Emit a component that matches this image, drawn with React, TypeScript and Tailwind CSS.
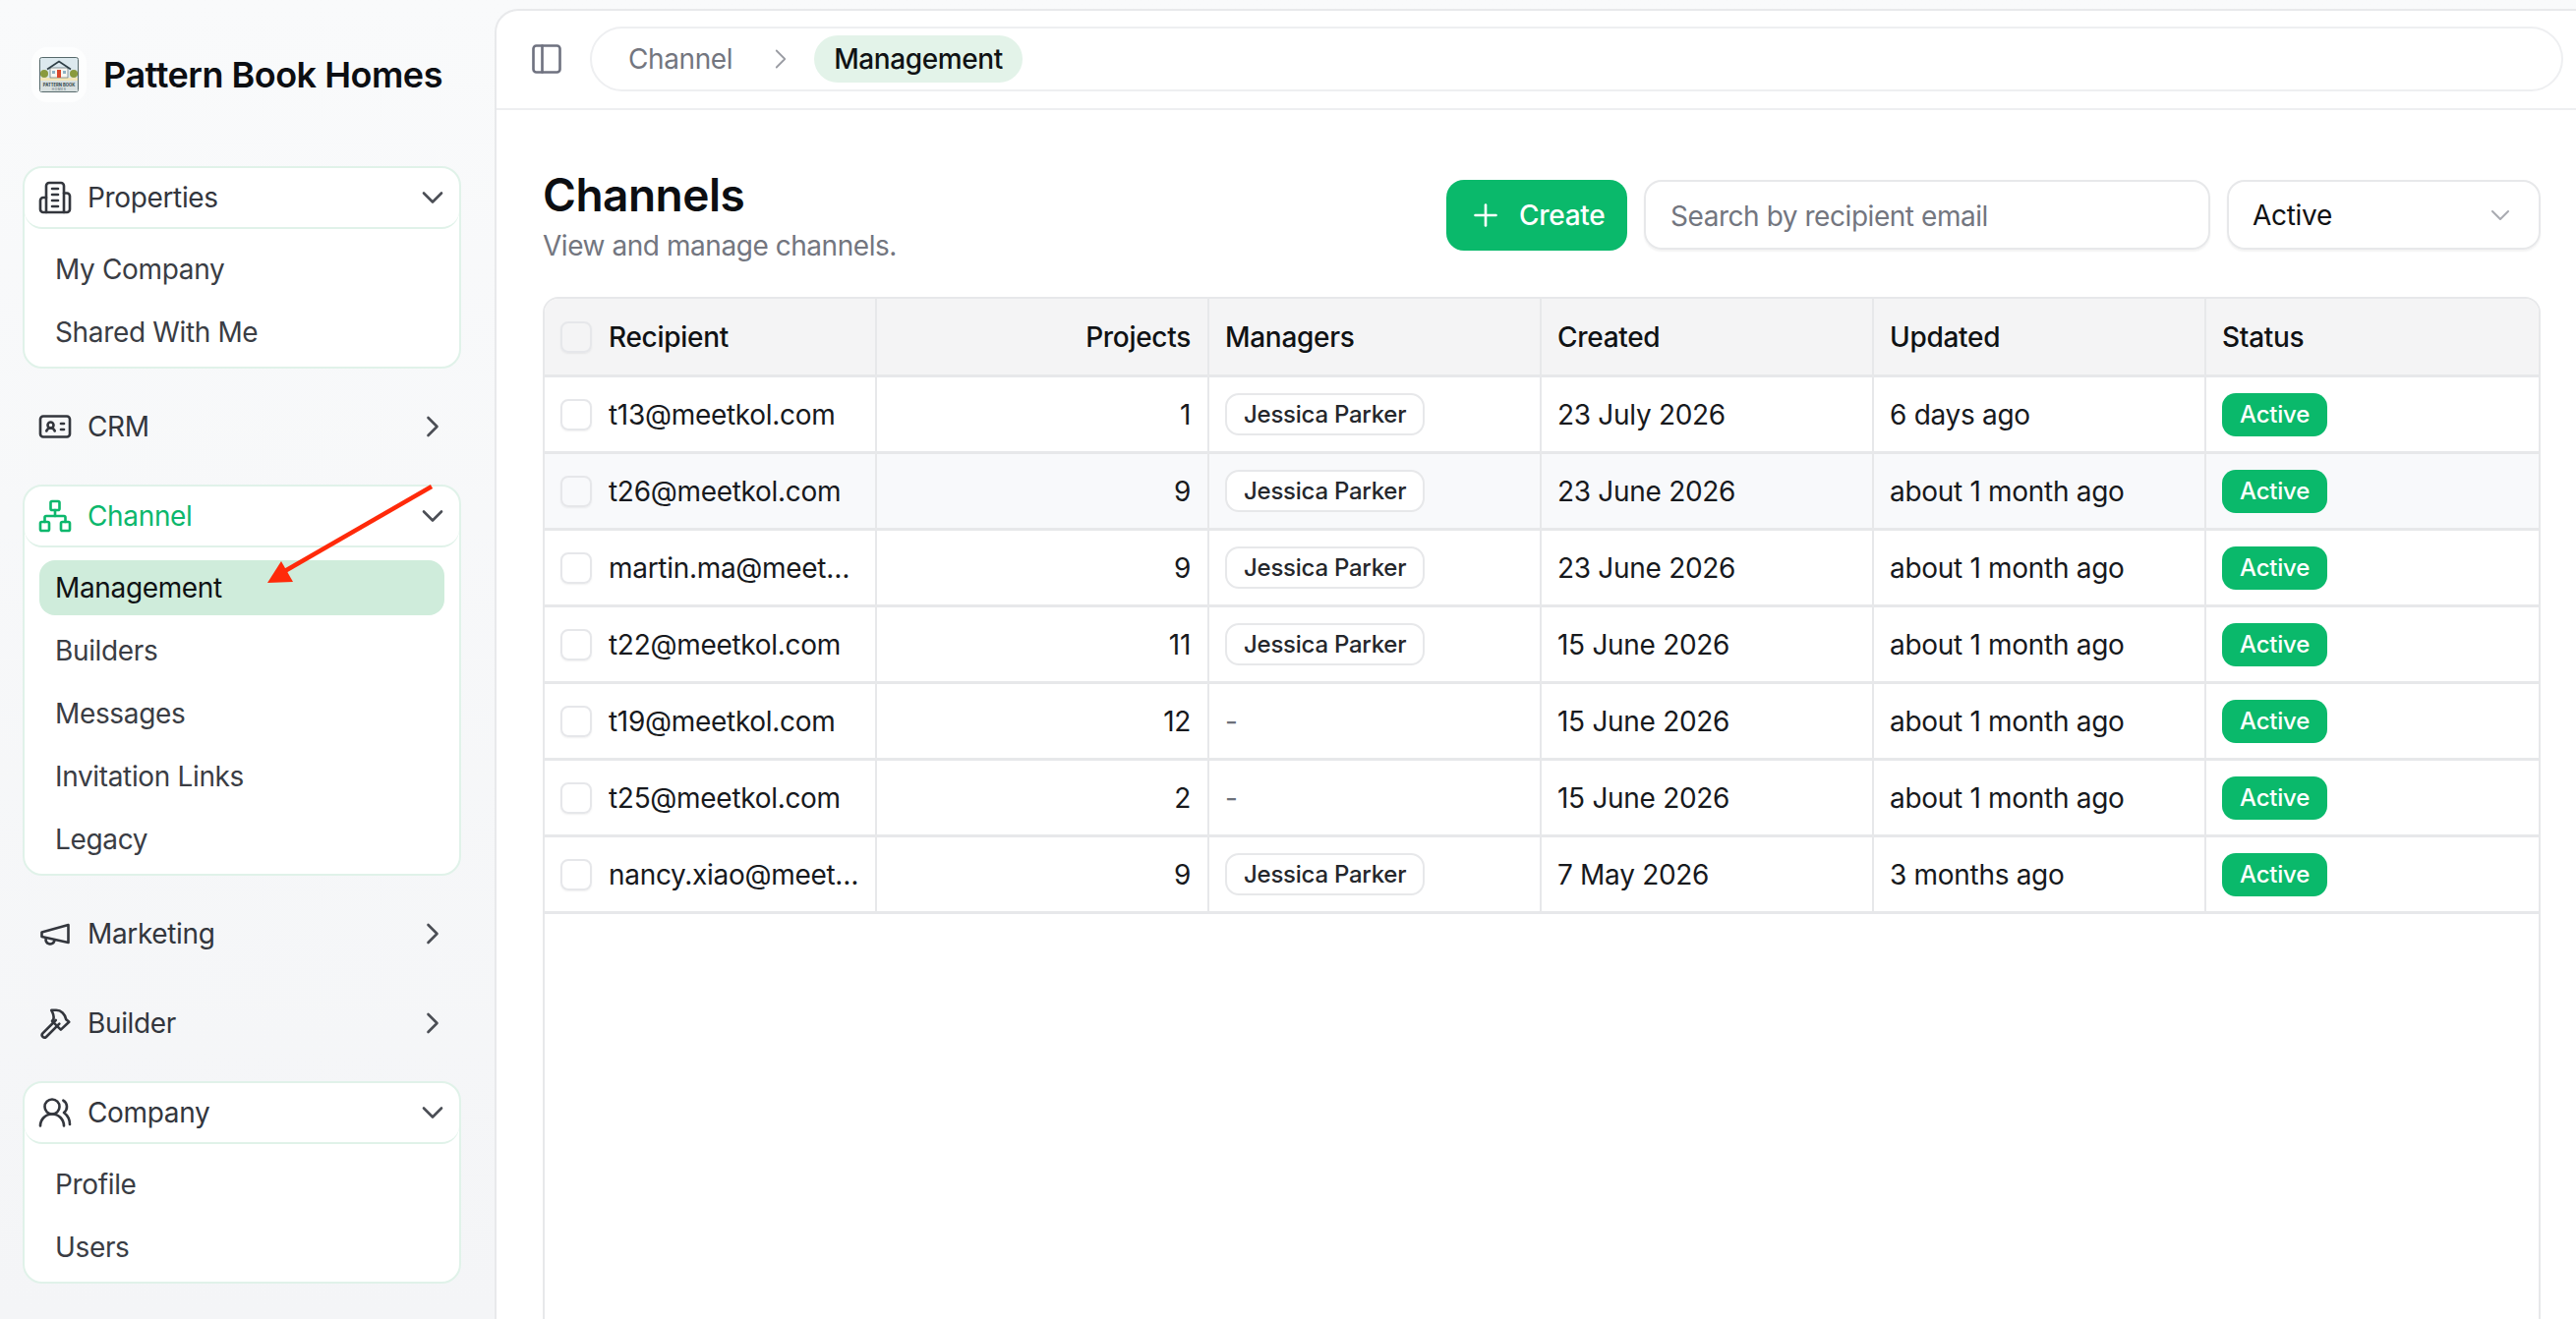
import { ChevronDown, ChevronRight, IdCard, Network, PanelLeft, Plus, UsersRound } from 'lucide-react'
import type { ReactNode } from 'react'

const rows = [
    { email: 't13@meetkol.com', projects: 1, manager: true, created: '23 July 2026', updated: '6 days ago' },
    { email: 't26@meetkol.com', projects: 9, manager: true, created: '23 June 2026', updated: 'about 1 month ago' },
    { email: 'martin.ma@meetkol.com', projects: 9, manager: true, created: '23 June 2026', updated: 'about 1 month ago' },
    { email: 't22@meetkol.com', projects: 11, manager: true, created: '15 June 2026', updated: 'about 1 month ago' },
    { email: 't19@meetkol.com', projects: 12, manager: false, created: '15 June 2026', updated: 'about 1 month ago' },
    { email: 't25@meetkol.com', projects: 2, manager: false, created: '15 June 2026', updated: 'about 1 month ago' },
    { email: 'nancy.xiao@meetkol.com', projects: 9, manager: true, created: '7 May 2026', updated: '3 months ago' },
]

const iconClass = 'h-9 w-9'

function Logo() {
    return (
        <div className="flex h-14 w-14 shrink-0 items-center justify-center rounded-2xl bg-white/70">
            <svg width="40" height="36" viewBox="0 0 40 36">
                <rect x="0.5" y="0.5" width="39" height="35" rx="2" fill="#dce9ee" stroke="#56696b" />
                <rect x="1" y="21" width="38" height="3" fill="#f3e6b8" />
                <circle cx="5" cy="17" r="4" fill="#8a9a3c" />
                <circle cx="35" cy="17" r="4" fill="#8a9a3c" />
                <rect x="11" y="11" width="18" height="10" fill="#f7f7f2" stroke="#4a5a60" strokeWidth="0.6" />
                <path d="M8 12.500 20 4.500l12 8" fill="none" stroke="#2f3f46" strokeWidth="1.6" />
                <rect x="18" y="13" width="4" height="8" fill="#d9472b" />
                <rect x="13" y="14" width="3" height="3" fill="#8fb2c4" />
                <rect x="24" y="14" width="3" height="3" fill="#8fb2c4" />
                <rect x="1" y="24" width="38" height="11" fill="#d8e0e0" />
                <text x="20" y="29.500" textAnchor="middle" fontSize="4.200" fontWeight="700" fill="#2f3f46">PATTERN BOOK</text>
                <text x="20" y="34" textAnchor="middle" fontSize="3.200" letterSpacing="0.600" fill="#4a5a60">HOMES</text>
            </svg>
        </div>
    )
}

// older lucide shapes, the installed package has redrawn these
function BuildingIcon() {
    return (
        <svg className={iconClass} viewBox="0 0 24 24" fill="none" stroke="currentColor" strokeWidth="1.75" strokeLinecap="round" strokeLinejoin="round">
            <path d="M6 22V4a2 2 0 0 1 2-2h8a2 2 0 0 1 2 2v18Z" />
            <path d="M6 12H4a2 2 0 0 0-2 2v6a2 2 0 0 0 2 2h2" />
            <path d="M18 9h2a2 2 0 0 1 2 2v9a2 2 0 0 1-2 2h-2" />
            <path d="M10 6h4M10 10h4M10 14h4M10 18h4" />
        </svg>
    )
}

function MegaphoneIcon() {
    return (
        <svg className={iconClass} viewBox="0 0 24 24" fill="none" stroke="currentColor" strokeWidth="1.75" strokeLinecap="round" strokeLinejoin="round">
            <path d="m3 11 18-5v12L3 14v-3z" />
            <path d="M11.6 16.8a3 3 0 1 1-5.8-1.6" />
        </svg>
    )
}

function HammerIcon() {
    return (
        <svg className={iconClass} viewBox="0 0 24 24" fill="none" stroke="currentColor" strokeWidth="1.75" strokeLinecap="round" strokeLinejoin="round">
            <path d="M12.5 10 3.6 18.9a1.7 1.7 0 0 0 2.4 2.4l8.900-8.900" />
            <path d="M9.500 3.200h3.300c3.300 0 6 2.600 6.700 6.300l2 1.700-5.600 5.200-1.400-1.300-4.500-4.500 1-1.500c.4-2.400-.4-4-1.500-5.900Z" />
        </svg>
    )
}

function NavHeader({ icon, label, open, active, grouped }: { icon: ReactNode; label: string; open?: boolean; active?: boolean; grouped?: boolean }) {
    return (
        <div className={`flex items-center ${grouped ? 'h-[60px] pl-[13px] pr-[9px]' : 'h-16 pl-[15px] pr-[11px]'} ${active ? 'text-[#0cb76c]' : 'text-[#33363d]'}`}>
            {icon}
            <span className="ml-[15px] flex-1 text-[28px] leading-none tracking-[-0.35px]">{label}</span>
            {open ? (
                <ChevronDown className="h-9 w-9 text-[#4b4e55]" strokeWidth={1.75} />
            ) : (
                <ChevronRight className="h-9 w-9 text-[#4b4e55]" strokeWidth={1.75} />
            )}
        </div>
    )
}

function NavGroup({ icon, label, items, active, current }: { icon: ReactNode; label: string; items: string[]; active?: boolean; current?: string }) {
    return (
        <div className="rounded-[20px] border-2 border-[#e0f2e9] bg-white">
            <div className="rounded-[18px] border-b-2 border-[#e0f2e9]">
                <NavHeader icon={icon} label={label} open active={active} grouped />
            </div>
            <div className="flex flex-col gap-2 pb-[7px] pl-[15px] pr-[15px] pt-[13px]">
                {items.map((item) => (
                    <div
                        key={item}
                        className={`flex h-14 items-center rounded-2xl px-[16px] text-[28px] leading-none tracking-[-0.35px] ${item === current ? 'bg-[#cfecdb] text-[#101214]' : 'text-[#3a3d44]'}`}
                    >
                        {item}
                    </div>
                ))}
            </div>
        </div>
    )
}

function Sidebar() {
    return (
        <aside className="flex w-[503px] shrink-0 flex-col pl-[23px] pr-[34px]">
            <div className="ml-[9px] mt-12 flex items-center gap-[17px]">
                <Logo />
                <span className="text-[36px] font-semibold leading-none tracking-[-0.5px] text-[#0c0e12]">Pattern Book Homes</span>
            </div>
            <nav className="mt-[65px] flex flex-col gap-[27px]">
                <NavGroup icon={<BuildingIcon />} label="Properties" items={['My Company', 'Shared With Me']} />
                <NavHeader icon={<IdCard className={iconClass} strokeWidth={1.75} />} label="CRM" />
                <NavGroup icon={<Network className={iconClass} strokeWidth={1.75} />} label="Channel" items={['Management', 'Builders', 'Messages', 'Invitation Links', 'Legacy']} active current="Management" />
                <NavHeader icon={<MegaphoneIcon />} label="Marketing" />
                <NavHeader icon={<HammerIcon />} label="Builder" />
                <NavGroup icon={<UsersRound className={iconClass} strokeWidth={1.75} />} label="Company" items={['Profile', 'Users']} />
            </nav>
        </aside>
    )
}

function Checkbox() {
    return <span className="h-8 w-8 shrink-0 rounded-lg border-2 border-[#e6e7ea] bg-transparent shadow-[0_1px_2px_rgba(0,0,0,0.06)]" />
}

function Channels() {
    const cell = 'flex items-center pl-[16px] pr-[17px] border-r-2 border-[#e7e8ea] last:border-r-0 min-w-0'
    return (
        <div className="flex-1 overflow-hidden rounded-t-2xl border-2 border-b-0 border-[#e7e8ea] tracking-[-0.3px]">
            <div className="grid h-[80px] grid-cols-6 border-b-[3px] border-[#e7e8ea] bg-[#f4f4f5] text-[28px] font-medium text-[#101214]">
                <div className={`${cell} gap-[17px]`}>
                    <Checkbox />
                    Recipient
                </div>
                <div className={`${cell} justify-end`}>Projects</div>
                <div className={cell}>Managers</div>
                <div className={cell}>Created</div>
                <div className={cell}>Updated</div>
                <div className={cell}>Status</div>
            </div>
            {rows.map((row, i) => (
                <div
                    key={row.email}
                    className={`grid h-[78px] grid-cols-6 border-b-[3px] border-[#e7e8ea] text-[28px] text-[#17191d] ${i === 1 ? 'bg-[#f8f9fb]' : ''}`}
                >
                    <div className="flex min-w-0 items-center gap-[17px] border-r-2 border-[#e7e8ea] pl-[16px] pr-[15px]">
                        <Checkbox />
                        <span className="truncate">{row.email}</span>
                    </div>
                    <div className={`${cell} justify-end`}>{row.projects}</div>
                    <div className={cell}>
                        {row.manager ? (
                            <span className="flex h-[43px] items-center rounded-[14px] border-2 border-[#e7e8ea] bg-white px-[17px] text-[24px] font-medium tracking-[-0.25px] text-[#25272c]">Jessica Parker</span>
                        ) : (
                            <span className="text-[#6c7079]">-</span>
                        )}
                    </div>
                    <div className={cell}>{row.created}</div>
                    <div className={cell}>{row.updated}</div>
                    <div className={cell}>
                        <span className="flex h-11 items-center rounded-[14px] bg-[#0ab96b] px-[18px] text-[24px] font-medium tracking-[-0.2px] text-white">Active</span>
                    </div>
                </div>
            ))}
        </div>
    )
}

export default function App() {
    return (
        <div className="relative flex h-[1342px] w-[2620px] overflow-hidden bg-linear-to-b from-[#f9fafb] to-[#f4f5f7] font-['Inter',sans-serif]">
            <Sidebar />
            <main className="mt-[9px] flex min-w-0 flex-1 flex-col rounded-tl-3xl border-l-2 border-t-2 border-[#e8e9eb] bg-white">
                <header className="flex h-[101px] shrink-0 items-center border-b-2 border-[#eeeff1] pb-[2px] pl-[33px] pr-[13px]">
                    <PanelLeft className="h-9 w-9 text-[#6f7280]" strokeWidth={1.75} />
                    <div className="ml-[26px] flex h-[66px] flex-1 items-center rounded-full border-2 border-[#eeeff1] pl-[37px] pr-2 tracking-[-0.4px]">
                        <span className="text-[28px] text-[#73767f]">Channel</span>
                        <ChevronRight className="ml-[32px] h-[34px] w-[34px] text-[#9a9ca3]" strokeWidth={1.25} />
                        <span className="ml-[17px] flex h-12 items-center rounded-full bg-[#e3f3e9] px-5 text-[28px] font-medium text-[#101214]">Management</span>
                    </div>
                </header>
                <div className="flex min-h-0 flex-1 flex-col pl-[47px] pr-[36px]">
                    <div className="mt-[56px] flex items-start justify-between">
                        <div>
                            <h1 className="text-[46px] font-semibold leading-[60px] tracking-[-0.5px] text-[#0c0e12]">Channels</h1>
                            <p className="mt-[6px] text-[28px] leading-8 tracking-[-0.45px] text-[#73767f]">View and manage channels.</p>
                        </div>
                        <div className="mt-[15px] flex items-start gap-[17px] tracking-[-0.3px]">
                            <button className="flex h-[72px] w-[184px] items-center gap-4 rounded-[18px] bg-[#0ab96b] pl-[22px] text-[28px] font-medium text-white">
                                <Plus className="h-9 w-9" strokeWidth={1.75} />
                                Create
                            </button>
                            <div className="flex h-[71px] w-[576px] items-center rounded-[18px] border-2 border-[#e7e8ea] pl-[25px] pt-[2px] text-[28px] tracking-[-0.45px] text-[#73767f] shadow-[0_2px_2px_rgba(0,0,0,0.05)]">
                                Search by recipient email
                            </div>
                            <div className="flex h-[71px] w-[319px] items-center justify-between rounded-[18px] border-2 border-[#e7e8ea] pl-[24px] pr-[23px] text-[28px] text-[#101214] shadow-[0_2px_2px_rgba(0,0,0,0.05)]">
                                Active
                                <ChevronDown className="h-8 w-8 text-[#a9abb1]" strokeWidth={1.5} />
                            </div>
                        </div>
                    </div>
                    <div className="mt-[36px] flex min-h-0 flex-1 flex-col">
                        <Channels />
                    </div>
                </div>
            </main>
            {/* annotation arrow */}
            <svg className="pointer-events-none absolute left-0 top-0" width="520" height="700" viewBox="0 0 520 700">
                <path d="M439 495 288 582" stroke="#ff2a0a" strokeWidth="4.5" fill="none" />
                <path d="M272 593 286 571 298 592Z" fill="#ff2a0a" />
            </svg>
        </div>
    )
}
